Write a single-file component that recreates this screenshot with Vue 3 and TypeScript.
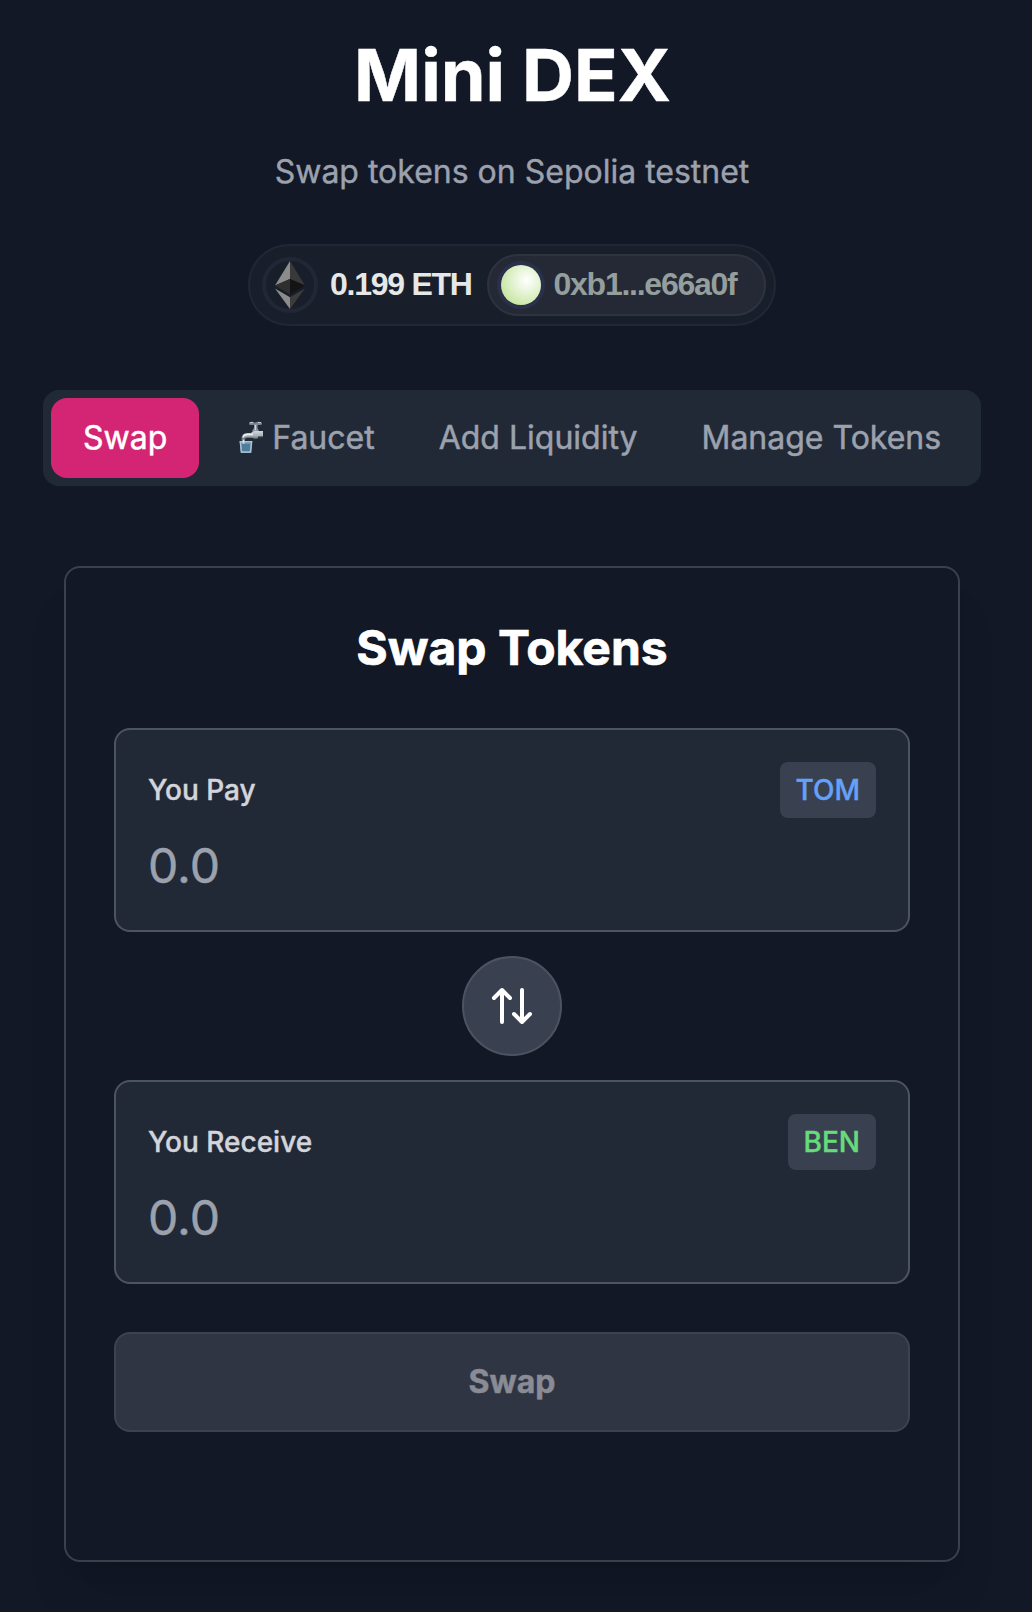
<script setup lang="ts">
import { ref } from 'vue'

interface Side {
  label: string
  token: string
  tone: string
}

const tabs = ['Swap', 'Faucet', 'Add Liquidity', 'Manage Tokens']
const active = ref('Swap')
const pay: Side = { label: 'You Pay', token: 'TOM', tone: 'blue' }
const receive: Side = { label: 'You Receive', token: 'BEN', tone: 'green' }
const sides = ref<Side[]>([pay, receive])
</script>

<template>
  <main class="page">
    <h1 class="title">Mini DEX</h1>
    <p class="subtitle">Swap tokens on Sepolia testnet</p>

    <div class="wallet">
      <span class="coin">
        <svg width="30" height="48" viewBox="0 0 30 48">
          <path d="M15 0 0 24.5 15 18z" fill="#8c8c8c" />
          <path d="M15 0 30 24.5 15 18z" fill="#393939" />
          <path d="M15 18 0 24.5 15 33.5z" fill="#2f2f2f" />
          <path d="M15 18 30 24.5 15 33.5z" fill="#141414" />
          <path d="M0 27.5 15 36.3V48z" fill="#8c8c8c" />
          <path d="M30 27.5 15 36.3V48z" fill="#3c3c3b" />
        </svg>
      </span>
      <span class="balance">0.199 ETH</span>
      <span class="account">
        <span class="avatar"></span>
        <span class="address">0xb1...e66a0f</span>
      </span>
    </div>

    <nav class="tabs">
      <button
        v-for="tab in tabs"
        :key="tab"
        class="tab"
        :class="{ active: tab === active }"
        @click="active = tab"
      >
        <svg v-if="tab === 'Faucet'" class="tap" width="32" height="32" viewBox="0 0 32 32">
          <defs>
            <linearGradient id="steel" x1="0" y1="0" x2="0" y2="1">
              <stop offset="0" stop-color="#d3d8dc" />
              <stop offset=".5" stop-color="#aab1b8" />
              <stop offset="1" stop-color="#43505d" />
            </linearGradient>
          </defs>
          <path d="M18 1.7q3-1.7 6 0 3-1.7 7 0v1.8q-4 1.2-7 0-3 1.2-6 0z" fill="#77838d" />
          <path d="M19 1.6h3M27 1.6h3" stroke="#cbd3d8" stroke-width="1" />
          <path d="M23 3h3.5v4l1.5 3h-7l2-3z" fill="#87929b" />
          <path d="M24.3 4v5" stroke="#e1e7ea" stroke-width="1" />
          <path d="M32 10v6.5h-4q-3 2.500-7 .2h-5q-2 0-2 2.800h-3.500q-.5-7.500 6-7.500H20q2-3 7-2z" fill="url(#steel)" />
          <path d="M12 16.500q1-3 5-3h5" fill="none" stroke="#edf0f2" stroke-width="1.3" />
          <path d="M27 15.500h5v2h-5z" fill="#283541" />
          <path d="M8.500 20h13l-1.200 12H10z" fill="#7798ac" />
          <path d="M10.500 23h9l-.8 7h-7.400z" fill="#4e7d9b" />
          <path d="M9.300 20.700l1 10.500h9.200l1-10.500z" fill="none" stroke="#adc5d4" stroke-width="1.3" />
          <path d="M12.500 18.500v4" stroke="#d6e1e8" stroke-width="2" />
        </svg>
        <span class="tab-name">{{ tab }}</span>
      </button>
    </nav>

    <section class="card">
      <h2 class="heading">Swap Tokens</h2>
      <template v-for="(side, i) in sides" :key="side.token">
        <div class="field">
          <div class="row">
            <span class="label">{{ side.label }}</span>
            <span class="token" :class="side.tone">{{ side.token }}</span>
          </div>
          <input class="amount" type="text" placeholder="0.0" />
        </div>
        <button v-if="i === 0" class="flip" aria-label="Switch direction">
          <svg width="48" height="48" viewBox="0 0 48 48" fill="none" stroke="#fff" stroke-width="4" stroke-linecap="round" stroke-linejoin="round">
            <path d="M14 40V8M6 16l8-8 8 8M34 8v32M26 32l8 8 8-8" />
          </svg>
        </button>
      </template>
      <button class="submit" disabled>Swap</button>
    </section>
  </main>
</template>

<style>
body {
  margin: 0;
  background: #121826;
}
</style>

<style scoped>
* {
  box-sizing: border-box;
}
button {
  margin: 0;
  border: 0;
  font-family: inherit;
}
.page {
  height: 1612px;
  padding: 35px 0 0;
  overflow: hidden;
  display: flex;
  flex-direction: column;
  align-items: center;
  background: #121826;
  color: #fff;
  font-family: Inter, sans-serif;
}
.title {
  margin: 0;
  padding-right: 7px;
  font-size: 72px;
  line-height: 80px;
  font-weight: 700;
  -webkit-text-stroke: 0.5px currentColor;
}
.subtitle {
  margin: 33px 8px 48px 0;
  font-size: 32px;
  line-height: 48px;
  color: #9ca1ae;
  -webkit-text-stroke: 0.4px currentColor;
}
.title,
.subtitle {
  white-space: nowrap;
}
.wallet {
  display: flex;
  align-items: center;
  width: 528px;
  height: 82px;
  margin-right: 8px;
  padding: 0 8px 0 12px;
  border: 2px solid #212734;
  border-radius: 41px;
  background: #191e2b;
  font-family: "Liberation Sans", sans-serif;
  font-size: 32px;
  font-weight: 700;
  letter-spacing: -1.25px;
  white-space: nowrap;
}
.coin {
  display: flex;
  align-items: center;
  justify-content: center;
  flex: none;
  width: 56px;
  height: 56px;
  border: 4px solid #212735;
  border-radius: 50%;
}
.balance {
  width: 157px;
  margin-left: 12px;
  padding-bottom: 2px;
  color: #e6e8e7;
}
.account {
  display: flex;
  align-items: center;
  flex: none;
  width: 279px;
  height: 62px;
  padding-left: 12px;
  margin-left: auto;
  border: 2px solid #2d333f;
  border-radius: 31px;
  background: #242935;
}
.avatar {
  width: 40px;
  height: 40px;
  border-radius: 50%;
  background: radial-gradient(circle at 65% 38%, #fff 0, #e4f3d3 38%, #cae7a7 72%, #bfdc9c 100%);
  box-shadow: 0 0 0 4px #2b304a;
}
.address {
  margin-left: 12.5px;
  padding-bottom: 2px;
  color: #949e9d;
}
.tabs {
  display: flex;
  width: 938px;
  height: 96px;
  margin: 64px 8px 80px 0;
  padding: 8px;
  border-radius: 16px;
  background: #212936;
}
.tab {
  display: flex;
  align-items: center;
  height: 80px;
  padding: 0 32px;
  border-radius: 16px;
  background: transparent;
  color: #9ca1ae;
  font-size: 32px;
  font-weight: 400;
  white-space: nowrap;
  -webkit-text-stroke: 0.5px currentColor;
}
.tab.active {
  background: #d42575;
  color: #fff;
}
.tab-name {
  padding-bottom: 2px;
}
.tap {
  margin-right: 9px;
  margin-bottom: 2px;
  -webkit-text-stroke: 0;
}
.card {
  display: flex;
  flex-direction: column;
  align-items: center;
  width: 896px;
  height: 996px;
  margin-right: 8px;
  padding: 48px;
  border: 2px solid #394150;
  border-radius: 16px;
  background: #121826;
  box-shadow: 0 40px 50px -10px rgba(0, 0, 0, 0.1), 0 16px 20px -12px rgba(0, 0, 0, 0.1);
}
.heading {
  margin: 0 0 48px;
  font-size: 48px;
  line-height: 64px;
  font-weight: 700;
  -webkit-text-stroke: 0.7px currentColor;
}
.field {
  width: 100%;
  height: 204px;
  padding: 32px;
  border: 2px solid #4c5462;
  border-radius: 16px;
  background: #212936;
}
.row {
  display: flex;
  align-items: center;
  justify-content: space-between;
  height: 56px;
  font-size: 28px;
  line-height: 40px;
  font-weight: 500;
  -webkit-text-stroke: 0.4px currentColor;
}
.label {
  color: #d3d5db;
}
.token {
  padding: 8px 16px;
  border-radius: 8px;
  background: #394150;
}
.blue {
  color: #66a1f9;
}
.green {
  color: #67db7c;
}
.amount {
  display: block;
  width: 100%;
  height: 64px;
  margin: 16px 0 0;
  padding: 0;
  border: 0;
  outline: 0;
  background: transparent;
  color: #fff;
  font: 400 48px/64px Inter, sans-serif;
  -webkit-text-stroke: 0.5px #9ca1ae;
}
.amount::placeholder {
  color: #9ca1ae;
  opacity: 1;
}
.flip {
  display: flex;
  align-items: center;
  justify-content: center;
  flex: none;
  width: 100px;
  height: 100px;
  margin: 24px 0;
  padding: 0;
  border: 2px solid #4c5462;
  border-radius: 50%;
  background: #394150;
}
.submit {
  width: 100%;
  height: 100px;
  margin-top: 48px;
  padding: 0 0 2px;
  border: 2px solid #3c4252;
  border-radius: 16px;
  background: #303544;
  color: #898c94;
  font-size: 32px;
  font-weight: 700;
  -webkit-text-stroke: 0.5px currentColor;
}
</style>
